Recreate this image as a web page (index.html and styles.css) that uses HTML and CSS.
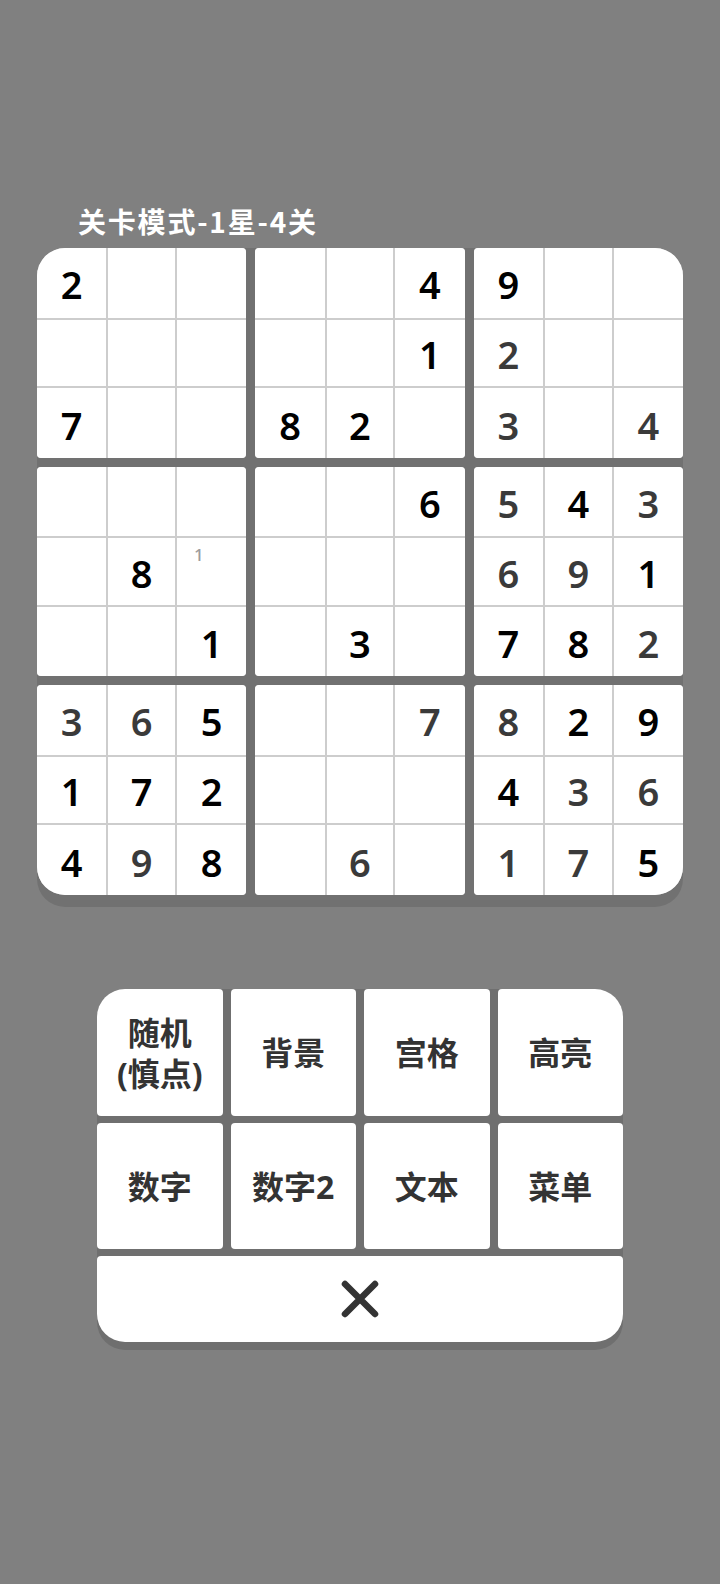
FILE: index.html
```html
<!DOCTYPE html>
<html lang="zh-CN">
<head>
<meta charset="UTF-8">
<meta name="viewport" content="width=device-width, initial-scale=1.0">
<title>数独</title>
<link rel="stylesheet" href="styles.css">
</head>
<body>
<div class="screen">
  <h1 class="level-title">关卡模式-1星-4关</h1>

  <!-- 9 boxes, filled by the script below -->
  <div class="board" id="board"></div>

  <div class="menu">
    <button class="menu-btn first">随机<br>(慎点)</button>
    <button class="menu-btn">背景</button>
    <button class="menu-btn">宫格</button>
    <button class="menu-btn last">高亮</button>
    <button class="menu-btn">数字</button>
    <button class="menu-btn">数字2</button>
    <button class="menu-btn">文本</button>
    <button class="menu-btn">菜单</button>
    <button class="menu-btn close" aria-label="关闭">
      <svg width="46" height="46" viewBox="0 0 46 46">
        <path d="M8 8 L38 38 M38 8 L8 38" stroke="#333" stroke-width="6.5" stroke-linecap="round" fill="none"/>
      </svg>
    </button>
  </div>
</div>

<script>
  // black = given, gray = filled in by the player
  const given = [
    "2....49..",
    ".....1...",
    "7..82....",
    ".....6.4.",
    ".8......1",
    "..1.3.78.",
    "..5....29",
    "172...4..",
    "4.8.....5"
  ];
  const user = [
    ".........",
    "......2..",
    "......3.4",
    "......5.3",
    "......69.",
    "........2",
    "36...78..",
    ".......36",
    ".9..6.17."
  ];
  const notes = { "4-2": "1" };
  const corners = { 0: "tl", 2: "tr", 6: "bl", 8: "br" };

  const board = document.getElementById('board');
  for (let b = 0; b < 9; b++) {
    const box = document.createElement('div');
    box.className = 'box' + (corners[b] ? ' ' + corners[b] : '');
    for (let i = 0; i < 9; i++) {
      const r = Math.floor(b / 3) * 3 + Math.floor(i / 3);
      const c = (b % 3) * 3 + (i % 3);
      const cell = document.createElement('div');
      cell.className = 'cell';
      if (given[r][c] !== '.') {
        cell.classList.add('given');
        cell.textContent = given[r][c];
      } else if (user[r][c] !== '.') {
        cell.classList.add('user');
        cell.textContent = user[r][c];
      } else if (notes[r + '-' + c]) {
        cell.innerHTML = `<span class="note">${notes[r + '-' + c]}</span>`;
      }
      box.appendChild(cell);
    }
    board.appendChild(box);
  }
</script>
</body>
</html>
```

FILE: styles.css
```css
body {
  margin: 0;
  background-color: #808080;
  font-family: "Noto Sans", "Noto Sans CJK SC", sans-serif;
}
.screen {
  width: 720px;
  height: 1584px;
  padding-top: 203px;
  box-sizing: border-box;
}
.level-title {
  margin: 0 0 9px 78px;
  font-family: "Noto Sans CJK SC", sans-serif;
  font-size: 28px;
  line-height: 36px;
  font-weight: 700;
  letter-spacing: 1.8px;
  color: #fff;
}
.board {
  margin: 0 37px;
  display: grid;
  grid-template-columns: repeat(3, 1fr);
  grid-template-rows: 210px 209px 210px;
  gap: 9px;
  background: #717171;
  border-radius: 28px;
  box-shadow: 0 12px 0 #717171;
}
.box {
  display: grid;
  grid-template-columns: 1fr 0.96fr 1fr;
  grid-template-rows: 1fr 0.96fr 1fr;
  gap: 2px;
  background: #cdcdcd;
  border-radius: 4px;
  overflow: hidden;
}
.box.tl {
  border-top-left-radius: 28px;
}
.box.tr {
  border-top-right-radius: 28px;
}
.box.bl {
  border-bottom-left-radius: 28px;
}
.box.br {
  border-bottom-right-radius: 28px;
}
.cell {
  position: relative;
  display: flex;
  align-items: center;
  justify-content: center;
  background: #fff;
  font-size: 38px;
  font-weight: 600;
  padding-top: 3px;
}
.cell.given {
  color: #000;
}
.cell.user {
  color: #3a3a3a;
}
.note {
  position: absolute;
  left: 17px;
  top: 8px;
  font-size: 17px;
  font-weight: 500;
  line-height: 1;
  color: #9c9c9c;
}
.menu {
  width: 526px;
  margin: 94px auto 0;
  display: grid;
  grid-template-columns: repeat(4, 1fr);
  grid-template-rows: 127px 126px 86px;
  gap: 7px 8px;
  background: #6f6f6f;
  border-radius: 28px;
  box-shadow: 0 8px 0 #6f6f6f;
}
.menu-btn {
  border: none;
  padding: 0;
  background: #fff;
  border-radius: 4px;
  font-family: "Noto Sans", "Noto Sans CJK SC", sans-serif;
  font-size: 32px;
  line-height: 41px;
  font-weight: 700;
  color: #333;
}
.menu-btn.first {
  border-top-left-radius: 28px;
}
.menu-btn.last {
  border-top-right-radius: 28px;
}
.menu-btn.close {
  grid-column: 1 / -1;
  display: flex;
  align-items: center;
  justify-content: center;
  border-radius: 4px 4px 28px 28px;
}
```
